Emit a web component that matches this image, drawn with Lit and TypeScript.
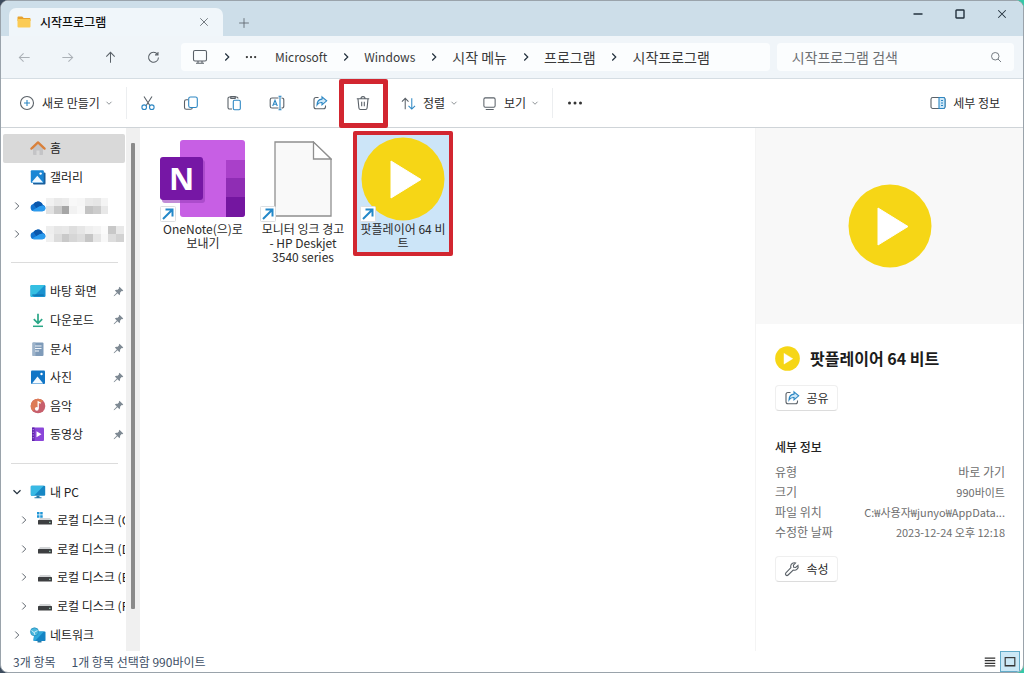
import { LitElement, html, svg, css, nothing } from "lit";
import { customElement } from "lit/decorators.js";

type Row = {
  label?: string;
  icon?: string;
  chevron?: "right" | "down";
  pinned?: boolean;
  nested?: boolean;
  current?: boolean;
  separator?: boolean;
  masked?: string[][];
};

const rows: Row[] = [
  { label: "홈", icon: "home", current: true },
  { label: "갤러리", icon: "gallery" },
  {
    icon: "cloud", chevron: "right",
    masked: [
      ["f1f1f1", "e9e9e9", "ececec", "f8f8f8", "f6f6f6", "e9e9e9", "e6e6e6", "f4f4f4", "ffffff", "ffffff"],
      ["e2e2e2", "c9c9c9", "a6a6a6", "f2f2f2", "f8f8f8", "c3c3c3", "cccccc", "e8e8e8", "ffffff", "ffffff"],
    ],
  },
  {
    icon: "cloud", chevron: "right",
    masked: [
      ["eeeeee", "e6e6e6", "e8e8e8", "dedede", "e6e6e6", "efefef", "f3f3f3", "fbfbfb", "c8c8c8", "e8e8e8"],
      ["f0f0f0", "dcdcdc", "c9c9c9", "d6d6d6", "dddddd", "c6c6c6", "e6e6e6", "f8f8f8", "dddddd", "d2d2d2"],
    ],
  },
  { separator: true },
  { label: "바탕 화면", icon: "desktop", pinned: true },
  { label: "다운로드", icon: "download", pinned: true },
  { label: "문서", icon: "document", pinned: true },
  { label: "사진", icon: "picture", pinned: true },
  { label: "음악", icon: "music", pinned: true },
  { label: "동영상", icon: "video", pinned: true },
  { separator: true },
  { label: "내 PC", icon: "pc", chevron: "down" },
  { label: "로컬 디스크 (C:)", icon: "system-drive", chevron: "right", nested: true },
  { label: "로컬 디스크 (D:)", icon: "drive", chevron: "right", nested: true },
  { label: "로컬 디스크 (E:)", icon: "drive", chevron: "right", nested: true },
  { label: "로컬 디스크 (F:)", icon: "drive", chevron: "right", nested: true },
  { label: "네트워크", icon: "network", chevron: "right" },
];

const drive = svg`
  <path d="M3 6h10l2 3H1z" fill="#d3d5d7"/>
  <rect x="1" y="8" width="14" height="4.500" rx=".6" fill="#3d3f41"/>
  <rect x="12" y="9.800" width="1.600" height="1" fill="#9fd6c0"/>`;

const colorIcons: Record<string, unknown> = {
  home: svg`
    <path d="M3 8v6.200c0 .5.3.8.8.8h2.700v-4.500h3V15h2.700c.5 0 .8-.3.8-.8V8L8 3.500z" fill="#c4c4c6"/>
    <path d="M1.400 8.600 8 2.400l6.600 6.200" fill="none" stroke="#d9813c" stroke-width="2.300" stroke-linecap="round" stroke-linejoin="round"/>`,
  gallery: svg`
    <rect x="3" y="3.500" width="12.500" height="12" rx="1" fill="#1b5f9c"/>
    <rect x=".8" y="1.300" width="13" height="12.700" rx="1" fill="#1b86d4"/>
    <path d="M1.500 13.600 7.300 6.800l5.800 6.800z" fill="#f4faff"/><circle cx="10.600" cy="4.600" r="1.200" fill="#fff"/>`,
  cloud: svg`
    <path d="M4 13.200a3.600 3.600 0 0 1-.6-7.100A5.200 5.200 0 0 1 12.700 6.700a3.300 3.300 0 0 1-.3 6.500z" fill="#1273cf"/>
    <path d="M3.400 6.100a5.200 5.200 0 0 1 9.300.6L6.600 10.600z" fill="#0b57ab"/>
    <path d="M2.200 12.600 9.500 8.300c2-1 5.300-1.200 6 1.700.3 1.900-1.200 3.200-3.100 3.200H4c-.7 0-1.300-.2-1.800-.6z" fill="#2b9bee"/>`,
  desktop: svg`
    <rect x=".5" y="2" width="15" height="12" rx="1.200" fill="#1a92d0"/>
    <path d="M.5 3.200C.5 2.500 1 2 1.700 2H15L3 14H1.700C1 14 .5 13.500.5 12.800z" fill="#35bfe2"/>
    <rect x="2.300" y="11.500" width="11.400" height="1.200" fill="#0f6fae"/>`,
  download: svg`
    <path d="M8 1.800v9M3.800 7.200 8 11.300l4.200-4.100" fill="none" stroke="#2aa787" stroke-width="1.700"/>
    <path d="M3 14.300h10" stroke="#2aa787" stroke-width="1.500"/>`,
  document: svg`
    <rect x="2.500" y="1.500" width="11" height="13.500" rx="1" fill="#7f9bb9"/>
    <rect x="2.500" y="1.500" width="3" height="13.500" fill="#9db3ca"/>
    <path d="M5 5h6.500M5 7.500h6.500M5 10h4" stroke="#f2f6fa" stroke-width="1.200"/>`,
  picture: svg`
    <rect x="1" y="1.500" width="14" height="13.500" rx="1" fill="#1276c6"/>
    <path d="M2 14.500 7.500 7.500l5.700 7z" fill="#f4faff"/><circle cx="11.500" cy="5" r="1.200" fill="#fff"/>`,
  music: svg`
    <circle cx="8" cy="8" r="7.300" fill="#c75f6c"/>
    <path d="M8 .7A7.300 7.300 0 0 0 .7 8c0 2 .8 3.800 2.100 5.200L13.200 2.800A7.300 7.300 0 0 0 8 .7z" fill="#dd7b55"/>
    <path d="M8.200 10.500V3.800l2.500 1.400" fill="none" stroke="#fff" stroke-width="1.300"/><circle cx="6.800" cy="10.800" r="1.900" fill="#fff"/>`,
  video: svg`
    <rect x="2" y="1.500" width="12" height="13.500" rx="1" fill="#8b46d9"/>
    <rect x="2" y="1.500" width="2.500" height="13.500" fill="#5c22a8"/>
    <path d="M3.200 3v11" stroke="#c9a5f2" stroke-width="1" stroke-dasharray="1.200 1.500"/>
    <path d="M6.500 5.300 11.500 8.300l-5 3z" fill="#fff"/>`,
  pc: svg`
    <rect x=".8" y="1.800" width="14.400" height="10" rx="1" fill="#1787c4"/>
    <path d="M.8 2.800c0-.6.4-1 1-1h12L4 11.800H1.800c-.6 0-1-.4-1-1z" fill="#39b9e4"/>
    <path d="M6.500 11.800h3v1.500h2v1h-7v-1h2z" fill="#2b7ba8"/>`,
  drive,
  "system-drive": svg`${drive}<path d="M0 0h2.500v2.500H0zM3.200 0h2.500v2.500H3.200zM0 3.200h2.500v2.500H0zM3.200 3.200h2.500v2.500H3.200z" fill="#2196d6"/>`,
  network: svg`
    <path d="M4.500 4.500h10c.6 0 1 .4 1 1v7.500c0 .6-.4 1-1 1H4.500c-.6 0-1-.4-1-1z" fill="#1584c4"/>
    <path d="M4.500 4.500H14L5 14h-.5c-.6 0-1-.4-1-1z" fill="#2fa9dc"/>
    <path d="M7.500 14h4v1.500h-4z" fill="#2b7ba8"/>
    <circle cx="4.500" cy="4.800" r="4" fill="#4ab8de" stroke="#2389b9" stroke-width=".7"/>
    <path d="M1.500 3.500 4 5.500l3.500-2M4 5.500 5 8" stroke="#dff4fb" stroke-width=".9" fill="none"/>`,
};

/* Line icons on a 16-unit grid; "accent" strokes are the blue ones. */
const lineIcons: Record<string, unknown> = {
  back: svg`<path d="M13.500 8H2.500M7 3.500 2.500 8 7 12.500"/>`,
  forward: svg`<path d="M2.500 8h11M9 3.500 13.500 8 9 12.500"/>`,
  up: svg`<path d="M8 13.500v-11M3.500 7 8 2.500 12.500 7"/>`,
  refresh: svg`<path d="M12.300 4.700A5.300 5.300 0 1 0 13.300 8M12.800 2v3.200H9.600"/>`,
  monitor: svg`<rect x="1.500" y="1.500" width="13" height="10.500" rx="1.500"/><path d="M6 12v2M10 12v2M4 14.300h8"/>`,
  right: svg`<path d="M6 4l4 4-4 4"/>`,
  down: svg`<path d="M4 6l4 4 4-4"/>`,
  close: svg`<path d="M3 3l10 10M13 3 3 13"/>`,
  plus: svg`<path d="M8 1.500v13M1.500 8h13"/>`,
  minimize: svg`<path d="M3.500 8h9"/>`,
  maximize: svg`<rect x="4" y="4" width="8" height="8" rx=".6"/>`,
  search: svg`<circle cx="7" cy="7" r="5"/><path d="M10.700 10.700l4 4"/>`,
  dots: svg`<g class="solid"><circle cx="2.500" cy="8" r="1.500"/><circle cx="8" cy="8" r="1.500"/><circle cx="13.500" cy="8" r="1.500"/></g>`,
  create: svg`<circle cx="8" cy="8" r="6.500"/><path class="accent" d="M8 5v6M5 8h6"/>`,
  cut: svg`<path d="M4 1.500l6 9.200M12 1.500l-6 9.200"/><circle class="accent" cx="4.200" cy="12.200" r="2.300"/><circle class="accent" cx="11.800" cy="12.200" r="2.300"/>`,
  copy: svg`<path d="M5 4.700H3.300c-1 0-1.800.8-1.800 1.800v6c0 1 .8 1.800 1.800 1.800h4.200c1 0 1.800-.6 1.800-1.600"/><rect class="accent" x="5.700" y="2" width="8.600" height="10.500" rx="1.800"/>`,
  paste: svg`<path d="M6 14H3.500C2.700 14 2 13.400 2 12.500v-9C2 2.700 2.700 2 3.500 2h7c.9 0 1.500.7 1.500 1.500M4.800 1.500h4.400v2H4.800z"/><rect class="accent" x="7.300" y="5.300" width="7" height="9.500" rx="1.200"/>`,
  rename: svg`<path d="M9.500 3H3C2 3 1.200 3.800 1.200 4.800v6.400C1.200 12.200 2 13 3 13h6.500"/><path d="M12.500 3c1.300 0 2.300.8 2.300 1.800v6.400c0 1-1 1.800-2.300 1.800"/><path class="accent" d="M11 1.200v13.600M9.500 1.200h3M9.500 14.800h3M3.700 11 6 5.200 8.300 11M4.500 9.200h3"/>`,
  share: svg`<path d="M6.500 2.500H4C2.800 2.500 2 3.300 2 4.500v7.200c0 1.200.8 2 2 2h7.500c1.200 0 2-.8 2-2v-1.200"/><path class="accent tint" d="M10 1.800l4.700 4L10 9.800V7.500C7.700 7.300 6.200 8 5 10c.1-3.300 1.800-5.600 5-5.900z"/>`,
  trash: svg`<path d="M1.800 3.800h12.400M6 3.600c0-2.600 4-2.600 4 0M3 4l.9 9c.1 1 .7 1.500 1.600 1.500h5c.9 0 1.500-.5 1.600-1.500L13 4M6.700 6.800v4.500M9.300 6.800v4.500"/>`,
  sort: svg`<path d="M4.500 14V2.500M1 6l3.500-3.500L8 6"/><path class="accent" d="M11.500 2.500V14M8 10.500l3.500 3.500 3.500-3.500"/>`,
  view: svg`<rect x="2" y="2" width="12" height="10" rx="1.500"/><path d="M4 14.300h8.500"/>`,
  panel: svg`<rect x="1" y="2.500" width="14" height="11" rx="1.800"/><path class="accent tint" d="M9 2.500h4.200c1 0 1.800.8 1.800 1.800v7.400c0 1-.8 1.800-1.800 1.800H9z"/><path class="accent" d="M11 5.500h2M11 8h2M11 10.500h2"/>`,
  wrench: svg`<path d="M14 4.300l-2.300 2.200-2-.3-.3-2L11.600 2C9.700 1.200 7 2.200 6.700 5c0 .7 0 1.200.2 1.700L1.900 11.800c-.6.7-.6 1.600 0 2.200s1.600.6 2.200 0L9.200 9c3 .9 5.800-1.700 4.800-4.700z"/>`,
  list: svg`<path d="M2 3.500h12M2 6.500h12M2 9.500h12M2 12.500h12"/>`,
  tiles: svg`<rect x="2.500" y="3" width="11" height="9.500"/><path d="M2.500 12h11"/>`,
};

const line = (name: string, cls = "") =>
  html`<svg class="icon ${cls}" viewBox="0 0 16 16" aria-hidden="true">${lineIcons[name]}</svg>`;

const pin = html`<svg class="pin" viewBox="0 0 12 12" aria-hidden="true">
  <path d="M7 .8 11.200 5l-1 .6-.8-.1-1.700 1.900c.2 1 0 1.900-.6 2.600L4.900 7.800 1.600 11l-.8.2.2-.8 3.200-3.300L2 4.900c.8-.6 1.700-.8 2.600-.6l1.900-1.700-.1-.8z" fill="#7f8a94"/>
</svg>`;

const player = html`<svg class="player" viewBox="0 0 84 84" aria-hidden="true">
  <circle cx="42" cy="42" r="41.500" fill="#f6d616"/>
  <path d="M30 24v37l30-18.500z" fill="#fff" stroke="#fff" stroke-linejoin="round"/>
</svg>`;

const shortcut = html`<svg class="shortcut" viewBox="0 0 16 16" aria-hidden="true">
  <rect x=".5" y=".5" width="15" height="15" rx="1" fill="#fff" stroke="#dcdfe2"/>
  <path d="M3 13 12 4M5.500 3.500h7v7" fill="none" stroke="#2388c9" stroke-width="2"/>
</svg>`;

const oneNote = html`<svg class="onenote" viewBox="0 0 86 78" aria-hidden="true">
  <rect x="20" y="0" width="65" height="77" rx="3" fill="#c75fe4"/>
  <path d="M66 20h19v18H66z" fill="#a940c9"/>
  <path d="M66 38h19v19H66z" fill="#8f2db4"/>
  <path d="M66 57h19v17c0 2-1 3-3 3H66z" fill="#7416a0"/>
  <rect x="2" y="20" width="43" height="43" rx="3" fill="#9a3fbd" opacity=".6"/>
  <rect x="0" y="17" width="43" height="43" rx="3" fill="#7617a5"/>
  <text x="21.500" y="50" text-anchor="middle" font-family="Open Sans, sans-serif" font-weight="700" font-size="31" fill="#fff">N</text>
</svg>`;

const paper = html`<svg class="paper" viewBox="0 0 58 76" aria-hidden="true">
  <path d="M1 1h38l18 17v57H1z" fill="#f9f9f9" stroke="#8f8f8f" stroke-width="1.300"/>
  <path d="M39.500 1v17H57z" fill="#fff" stroke="#8f8f8f" stroke-width="1.300"/>
</svg>`;

@customElement("app-root")
export class AppRoot extends LitElement {
  static styles = css`
    :host {
      display: block;
      background: linear-gradient(90deg, #3d4c5e, #6d8496 60%, #35c9a8);
      font: 12px/16px "Noto Sans CJK KR", "Noto Sans", sans-serif;
      color: #2b2b2b;
    }
    * { box-sizing: border-box; }
    button, input { font: inherit; color: inherit; }
    button { background: none; border: 0; padding: 0; cursor: default; display: inline-flex; align-items: center; justify-content: center; white-space: nowrap; }
    a { color: inherit; text-decoration: none; }
    h1, h2, dl, dd, ul, ol { margin: 0; padding: 0; list-style: none; }
    .icon { width: 16px; height: 16px; flex: none; fill: none; stroke: #5a6168; stroke-width: 1.1; display: block; }
    .icon .accent { stroke: #2d87c3; }
    .icon .tint { fill: #cfe8f8; }
    .icon .solid { fill: #333; stroke: none; }
    .small { width: 10px; height: 10px; }
    .medium { width: 12px; height: 12px; }
    .large { width: 14px; height: 14px; }
    .faint { stroke: #aab0b6; }
    .dark { stroke: #22303c; stroke-width: 1.4; }

    .window { min-height: 100vh; display: flex; flex-direction: column; background: #fff; border: 1px solid #9aa3ab; border-radius: 8px; overflow: hidden; }

    .titlebar { display: flex; align-items: stretch; height: 35px; background: #cddee9; padding-left: 8px; }
    .tab { display: flex; align-items: center; width: 214px; margin-top: 7px; padding: 0 13px 0 8px; background: #f0f6fa; border-radius: 7px 7px 0 0; gap: 9px; }
    .folder { width: 14px; height: 14px; flex: none; }
    .tab-name { flex: 1; font-size: 12px; font-weight: 500; color: #111; }
    .new-tab { width: 42px; padding-top: 8px; }
    .caption { display: flex; margin-left: auto; height: 26px; }
    .caption button { width: 42px; }

    .navbar { display: flex; align-items: center; height: 43px; background: #f0f5f9; border-bottom: 1px solid #d5dde3; padding-right: 9px; }
    .history { display: flex; padding-left: 2px; margin-right: 6px; }
    .history button { width: 43px; height: 28px; }
    .history .icon { width: 15px; height: 15px; }
    .address { display: flex; align-items: center; flex: 588 1 588px; height: 28px; background: #fbfdfe; border-radius: 4px; font-size: 14px; line-height: 20px; color: #3a3a3a; min-width: 0; padding-left: 11px; overflow: hidden; }
    .crumbs { display: flex; align-items: center; white-space: nowrap; }
    .crumbs li { display: flex; align-items: center; }
    .sep { display: flex; justify-content: center; width: 37px; flex: none; }
    .latin { font-size: 12px; }
    .ellipsis { width: 12px; margin-right: 18px; }
    .search { display: flex; align-items: center; flex: 237 1 237px; min-width: 0; height: 28px; margin-left: 7px; background: #fbfdfe; border-radius: 4px; padding: 0 12px 0 15px; }
    .search input { flex: 1; min-width: 0; border: 0; outline: 0; background: none; padding: 0; font-size: 14px; line-height: 20px; }
    .search input::placeholder { color: #6c6f72; opacity: 1; }

    .toolbar { display: flex; align-items: center; height: 49px; border-bottom: 1px solid #cfd4d8; padding: 0 23px 0 18px; }
    .toolbar button { height: 32px; }
    .menu { gap: 7px; }
    .menu .small { margin-left: -3px; }
    .rule { width: 1px; height: 30px; background: #eceef0; }
    .commands { display: flex; margin: 0 16px 0 12px; border-left: 1px solid #eceef0; }
    .commands button { width: 43px; }
    .marked { position: relative; }
    .marked::after { content: ""; position: absolute; inset: -8px -3px -9px; border: 5px solid #d22630; border-radius: 2px; }
    .view-menu { margin: 0 12px 0 23px; }
    .view-menu .icon:first-child, .sort-menu .icon:first-child { width: 15px; height: 15px; }
    .more { margin-left: 14px; }
    .details-toggle { margin-left: auto; gap: 7px; }

    .body { flex: 1; display: flex; }
    .sidebar { width: 125px; padding: 6px 1px 2px 2px; display: flex; flex-direction: column; overflow: hidden; }
    .row { flex: 1 1 28px; display: flex; align-items: center; white-space: nowrap; color: #222; overflow: hidden; }
    .row.current { background: #d9d9d9; border-radius: 2px; }
    .row.nested { padding-left: 7px; }
    .twisty { width: 27px; display: flex; justify-content: center; flex: none; }
    .row-icon { width: 16px; height: 16px; flex: none; margin-right: 4px; overflow: visible; }
    .row .label { flex: 1; min-width: 0; overflow: hidden; }
    .masked { width: 78px; height: 16px; flex: none; margin-left: -4px; }
    .pin { width: 11px; height: 11px; margin-right: 1px; flex: none; }
    .separator { flex: 1 1 28px; display: flex; align-items: center; padding: 0 7px 0 8px; }
    .separator::before { content: ""; flex: 1; height: 1px; background: #dcdcdc; }
    .scrollbar { width: 14px; background: #f0f0f0; padding: 15px 5px 42px; display: flex; }
    .thumb { flex: 1; background: #8b8b8b; border-radius: 1px; }

    .files { flex: 1; display: flex; flex-wrap: wrap; align-content: flex-start; align-items: flex-start; gap: 6px; padding: 7px 16px; min-width: 0; }
    .file { position: relative; flex-direction: column; width: 94px; padding: 1px 0; justify-content: flex-start; white-space: normal; line-height: 14px; }
    .file.selected { background: #cce5f8; padding-bottom: 2px; }
    .file.selected::after { content: ""; position: absolute; inset: -4px -3px; border: 4px solid #d22630; border-radius: 2px; }
    .art { position: relative; width: 86px; height: 86px; display: flex; align-items: center; justify-content: center; }
    .caption-text { padding: 0 4px; text-align: center; word-break: break-word; }
    .player { width: 84px; height: 84px; display: block; }
    .onenote { width: 86px; height: 78px; }
    .paper { width: 58px; height: 76px; }
    .shortcut { position: absolute; left: 0; bottom: 0; width: 16px; height: 16px; }

    .details { width: 268px; border-left: 1px solid #f4f4f4; }
    .preview { height: 196px; background: #f8f8f8; display: flex; align-items: center; justify-content: center; }
    .info { padding: 21px 18px 20px 19px; }
    .heading { display: flex; align-items: center; gap: 10px; height: 26px; }
    .heading .player { width: 25px; height: 25px; }
    .heading h1 { font-size: 16px; line-height: 22px; font-weight: 700; color: #1c1c1c; }
    .card { width: 63px; height: 26px; gap: 6px; border: 1px solid #efefef; border-bottom-color: #dcdcdc; border-radius: 4px; background: #fff; margin-top: 14px; }
    .info h2 { font-size: 12px; line-height: 16px; font-weight: 500; margin: 28px 0 7px; color: #222; }
    .facts { color: #6e6e6e; }
    .fact { display: flex; justify-content: space-between; height: 20px; line-height: 20px; gap: 12px; white-space: nowrap; }
    .fact dd { min-width: 0; overflow: hidden; text-overflow: ellipsis; }
    .fact .compact { font-size: 11px; }

    .status { display: flex; align-items: center; height: 21px; padding: 0 3px 0 12px; color: #3e4f66; gap: 16px; }
    .views { margin-left: auto; display: flex; }
    .views button { width: 20px; height: 21px; }
    .views .on { background: #cbe8f6; border: 1px solid #62abc9; }
    .views .icon { width: 14px; height: 14px; stroke: #333; stroke-width: 1.3; }
  `;

  private renderRow(r: Row) {
    if (r.separator) return html`<li class="separator" role="separator"></li>`;
    return html`<li class="row ${r.current ? "current" : ""} ${r.nested ? "nested" : ""}">
      <span class="twisty">${r.chevron ? line(r.chevron, r.chevron === "down" ? "large dark" : "large") : nothing}</span>
      <svg class="row-icon" viewBox="0 0 16 16" aria-hidden="true">${colorIcons[r.icon!]}</svg>
      ${r.masked
        ? html`<svg class="masked" viewBox="0 0 10 2" preserveAspectRatio="none" shape-rendering="crispEdges" aria-hidden="true">
            ${r.masked.map((cells, y) => cells.map((c, x) => svg`<rect x=${x} y=${y} width="1" height="1" fill=${"#" + c}/>`))}
          </svg>`
        : html`<a class="label" href="#">${r.label}</a>`}
      ${r.pinned ? pin : nothing}
    </li>`;
  }

  render() {
    const crumbs = ["Microsoft", "Windows", "시작 메뉴", "프로그램", "시작프로그램"];
    const facts = [
      ["유형", "바로 가기"],
      ["크기", "990바이트"],
      ["파일 위치", "C:₩사용자₩junyo₩AppData..."],
      ["수정한 날짜", "2023-12-24 오후 12:18"],
    ];
    return html`
      <div class="window">
        <header class="titlebar">
          <div class="tab">
            <svg class="folder" viewBox="0 0 14 14" aria-hidden="true">
              <path d="M.5 2.500c0-.6.4-1 1-1h3.700l1.500 1.500h5.800c.6 0 1 .4 1 1v2H.5z" fill="#e8a32e"/>
              <rect x=".5" y="4" width="13" height="8.500" rx="1" fill="#fbcb54"/>
            </svg>
            <span class="tab-name">시작프로그램</span>
            <button aria-label="탭 닫기">${line("close", "medium")}</button>
          </div>
          <button class="new-tab" aria-label="새 탭">${line("plus", "medium")}</button>
          <div class="caption">
            <button aria-label="최소화">${line("minimize", "dark")}</button>
            <button aria-label="최대화">${line("maximize", "dark")}</button>
            <button aria-label="닫기">${line("close", "dark medium")}</button>
          </div>
        </header>

        <div class="navbar">
          <div class="history">
            <button aria-label="뒤로">${line("back", "faint")}</button>
            <button aria-label="앞으로">${line("forward", "faint")}</button>
            <button aria-label="위로">${line("up")}</button>
            <button aria-label="새로 고침">${line("refresh")}</button>
          </div>
          <nav class="address" aria-label="주소">
            ${line("monitor")}
            <span class="sep">${line("right", "large dark")}</span>
            ${line("dots", "ellipsis")}
            <ol class="crumbs">
              ${crumbs.map((c, i) => html`<li>
                ${i ? html`<span class="sep">${line("right", "large dark")}</span>` : nothing}
                <a href="#" class=${/^[A-Z]/.test(c) ? "latin" : ""}>${c}</a>
              </li>`)}
            </ol>
          </nav>
          <label class="search">
            <input type="search" placeholder="시작프로그램 검색" aria-label="시작프로그램 검색" />
            ${line("search", "medium")}
          </label>
        </div>

        <div class="toolbar">
          <button class="menu">${line("create")}새로 만들기 ${line("down", "small")}</button>
          <div class="commands">
            <button aria-label="잘라내기">${line("cut")}</button>
            <button aria-label="복사">${line("copy")}</button>
            <button aria-label="붙여넣기">${line("paste")}</button>
            <button aria-label="이름 바꾸기">${line("rename")}</button>
            <button aria-label="공유">${line("share")}</button>
            <button class="marked" aria-label="삭제">${line("trash")}</button>
          </div>
          <button class="menu sort-menu">${line("sort")}정렬 ${line("down", "small")}</button>
          <button class="menu view-menu">${line("view")}보기 ${line("down", "small")}</button>
          <span class="rule"></span>
          <button class="more" aria-label="자세히">${line("dots")}</button>
          <button class="details-toggle">${line("panel")}세부 정보</button>
        </div>

        <div class="body">
          <ul class="sidebar">${rows.map((r) => this.renderRow(r))}</ul>
          <div class="scrollbar"><div class="thumb"></div></div>
          <main class="files">
            <button class="file">
              <span class="art">${oneNote}${shortcut}</span>
              <span class="caption-text">OneNote(으)로 보내기</span>
            </button>
            <button class="file">
              <span class="art">${paper}${shortcut}</span>
              <span class="caption-text">모니터 잉크 경고 - HP Deskjet 3540 series</span>
            </button>
            <button class="file selected">
              <span class="art">${player}${shortcut}</span>
              <span class="caption-text">팟플레이어 64 비트</span>
            </button>
          </main>
          <aside class="details">
            <div class="preview">${player}</div>
            <div class="info">
              <div class="heading">${player}<h1>팟플레이어 64 비트</h1></div>
              <button class="card">${line("share")}공유</button>
              <h2>세부 정보</h2>
              <dl class="facts">
                ${facts.map(([k, v]) => html`<div class="fact"><dt>${k}</dt><dd class=${/\d|:/.test(v) ? "compact" : ""}>${v}</dd></div>`)}
              </dl>
              <button class="card">${line("wrench")}속성</button>
            </div>
          </aside>
        </div>

        <footer class="status">
          <span>3개 항목</span>
          <span>1개 항목 선택함 990바이트</span>
          <div class="views">
            <button aria-label="자세히 보기">${line("list")}</button>
            <button class="on" aria-label="큰 아이콘">${line("tiles")}</button>
          </div>
        </footer>
      </div>
    `;
  }
}
